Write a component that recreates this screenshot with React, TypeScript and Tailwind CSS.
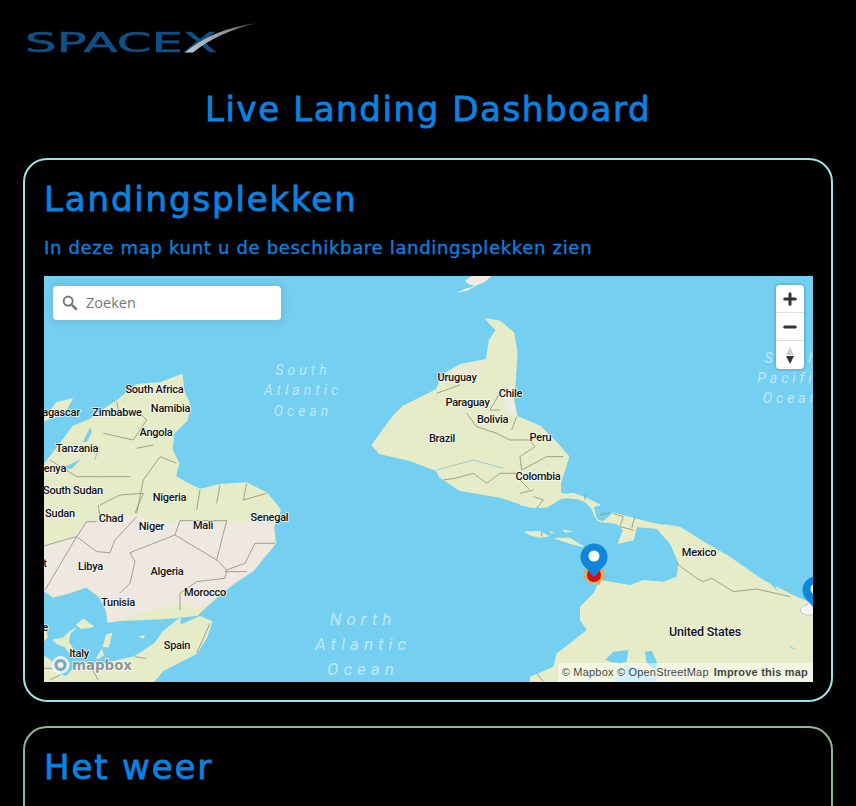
import { Plus, Minus } from 'lucide-react';

const labels: Array<[string, number, number, number?]> = [
  ['South Africa', 154.5, 393],
  ['agascar', 61, 416],
  ['Zimbabwe', 117, 416],
  ['Namibia', 170.5, 412],
  ['Angola', 156, 436],
  ['Tanzania', 77, 452],
  ['enya', 55, 472],
  ['South Sudan', 73, 494],
  ['Nigeria', 169.5, 501],
  ['Sudan', 60, 517],
  ['Chad', 111, 522],
  ['Niger', 151.5, 530],
  ['Mali', 203, 529],
  ['Senegal', 269.5, 521],
  ['Libya', 90.5, 570],
  ['Algeria', 167, 575],
  ['Morocco', 205, 596],
  ['Tunisia', 118, 606],
  ['Spain', 177, 649],
  ['Italy', 79, 657],
  ['t', 45, 567],
  ['e', 45, 631],
  ['Uruguay', 457, 381],
  ['Chile', 510.5, 397],
  ['Paraguay', 467.5, 406],
  ['Bolivia', 492.5, 423],
  ['Peru', 540.5, 441],
  ['Brazil', 442, 442],
  ['Colombia', 538, 480],
  ['Mexico', 699, 556],
  ['United States', 705, 636, 12.5],
];

const oceans: Array<[string, number, number, number]> = [
  ['South', 303, 375, 14],
  ['Atlantic', 303, 395, 14],
  ['Ocean', 303, 416, 14],
  ['North', 363, 625, 17],
  ['Atlantic', 363, 650, 17],
  ['Ocean', 363, 675, 17],
  ['South', 792, 363, 14],
  ['Pacific', 792, 383, 14],
  ['Ocean', 792, 403, 14],
];

const LAND = '#e5ecc7';
const WATER = '#75cff0';
const BORDER = '#8b8f7c';

function Logo() {
  return (
    <svg viewBox="0 0 260 60" className="block h-[60px] w-[260px] blur-[0.5px]">
      <defs>
        <linearGradient id="swoosh" x1="0" x2="1">
          <stop offset="0" stopColor="#c4c8cc" />
          <stop offset="0.6" stopColor="#8f9296" />
          <stop offset="1" stopColor="#222" />
        </linearGradient>
      </defs>
      <text
        x="25"
        y="52"
        textLength="192"
        lengthAdjust="spacingAndGlyphs"
        fontFamily="'DejaVu Sans', sans-serif"
        fontSize="26"
        fill="#0f5088"
        stroke="#0f5088"
        strokeWidth="0.5"
      >
        SPACEX
      </text>
      <path d="M185 52.5C202 38 226 27 257 23C231 29 208 40 193 52.5Z" fill="url(#swoosh)" />
    </svg>
  );
}

function WorldMap() {
  return (
    <svg viewBox="44 276 769 406" className="block h-[406px] w-[769px] bg-[#75cff0]">
      {/* top sliver */}
      <g transform="translate(430 270) scale(0.3333)">
        <path d="M105 32L125 18H185L165 35L135 48L115 42Z" fill="#f1ebe3" />
        <path d="M78 68L110 55L140 48L110 62Z" fill="#f4f6ea" />
      </g>

      {/* africa / spain */}
      <g transform="translate(20 370) scale(0.3333)">
        <g fill={LAND} stroke={LAND} strokeWidth="6" strokeLinejoin="round">
          <path d="M72 150L110 100L155 88L130 130Z" />
          <path d="M72 285L100 250L130 210L160 170L210 150L250 120L290 95L320 70L350 45L420 40L485 15L490 60L510 110L500 150L460 190L455 240L475 280L465 320L500 340L540 360L600 345L680 340L740 370L780 420L760 470L765 520L700 600L640 640L590 680L530 735L430 745L300 750L265 755L260 720L240 680L200 650L140 670L100 680L72 660Z" />
        </g>
        <path
          d="M72 530L150 505L200 455L340 435L450 462L480 450L620 452L760 458L765 520L700 600L640 640L590 680L540 715L480 700L400 720L300 750L265 755L260 720L240 680L200 650L140 670L100 680L72 660Z"
          fill="#eee8e1"
        />
        <g fill="none" stroke={BORDER} strokeWidth="2.4">
          <path d="M72 528L150 505L170 500L230 545L270 548L285 510L350 440M330 548L345 575L330 640L300 670M330 548L465 495L590 570L620 600L615 625L530 635L480 670V720M465 495L480 452H620L590 570M620 600L675 580L705 520H765M170 500L75 660M615 605H680" />
          <path d="M230 455L200 455L170 500M240 405L300 375L370 370L345 430M235 405L240 445M350 430L370 330L420 260L470 280M540 360L530 420M600 345L590 400M680 340L670 390L740 370M90 270L170 320L230 320L330 320M250 190L340 210L380 150L360 130M350 235L400 225M290 95L300 140" />
        </g>
        <path d="M190 215L210 175L215 185L200 215Z M115 300L180 270L155 295Z M225 265L238 230L225 270Z" fill={WATER} stroke="#8cc0c8" strokeWidth="1.5" />
      </g>

      {/* mediterranean + europe */}
      <g transform="translate(40 600) scale(0.3333)">
        <g fill={LAND} stroke={LAND} strokeWidth="4" strokeLinejoin="round">
          <path d="M12 75L22 110L12 122Z" />
          <path d="M110 75L130 58L160 80L125 85Z" />
          <path d="M40 120L70 115L85 100L105 85L90 100L85 125L100 150L115 170L95 165L75 140L50 130Z" />
          <path d="M190 140L200 105L215 100L205 140Z" />
          <path d="M170 175L185 150L190 165L175 175Z" />
          <path d="M300 110L312 108L310 114Z" />
          <path d="M12 170L30 180L40 205L60 225L80 230L115 190L145 195L200 190L285 170L345 130L370 95L420 55V100L400 140L365 190L340 210L325 245H12Z" />
        </g>
        <path d="M285 170L340 180M12 205L40 205M30 240L60 225M150 195L175 240" fill="none" stroke={BORDER} strokeWidth="2.4" />
      </g>
      <g transform="translate(20 370) scale(0.3333)">
        <path d="M400 840L430 790L540 740L575 755L560 800L530 850L430 900L400 935H340L365 885Z" fill={LAND} stroke={LAND} strokeWidth="5" strokeLinejoin="round" />
        <path d="M530 850L570 760" fill="none" stroke={BORDER} strokeWidth="2.4" />
      </g>

      {/* south america */}
      <g transform="translate(360 310) scale(0.3333)">
        <path
          d="M380 28L420 35L460 70L470 130L465 200L460 270L470 320L540 350L590 400L625 440L600 520L600 550L650 565L610 560L560 590L510 590L420 560L300 540L240 500L230 480L150 450L60 430L38 405L100 320L130 290L230 240L250 195L300 165L380 150L390 90L410 60Z"
          fill={LAND}
          stroke={LAND}
          strokeWidth="6"
          strokeLinejoin="round"
        />
        <path d="M300 165L375 150L370 200L300 225L250 215L250 195Z" fill="#e9e8d0" />
        <path d="M425 240L462 230L460 275L470 320L440 305Z" fill="#eeebe4" />
        <g fill="none" stroke={BORDER} strokeWidth="2.4">
          <path d="M230 250L300 225M320 310L350 350L410 370L450 390L510 390L525 410L480 440L485 480L560 440L610 440M470 490L420 490L380 520L340 490L285 505L250 510M470 500L540 570M420 300L390 300L425 240M470 320L455 360" />
          <path d="M230 480L340 450L430 475" stroke="#8fc3c4" />
        </g>
      </g>

      {/* central + north america */}
      <g transform="translate(520 490) scale(0.3333)">
        <g fill={LAND} stroke={LAND} strokeWidth="3" strokeLinejoin="round">
          <path d="M0 0H120L115 15L90 30L60 52L0 45Z" />
          <path d="M122 15L160 10L200 25L240 45L220 50L230 90L250 95L280 68L340 85L400 100L450 110V160L410 115L350 110L340 150L295 160L310 120L290 100L240 95L225 80L215 55L195 35L160 22L130 25Z" />
          <path d="M15 125H60L85 138L60 142L30 135ZM130 120L155 125L135 126ZM105 145H150L190 170L150 160ZM90 125L100 128L92 130Z" />
        </g>
        <path d="M0 10L40 0M50 55L70 30L40 20" fill="none" stroke={BORDER} strokeWidth="2.4" />
        <path d="M195 15V30M240 75L270 68M280 70L310 80L300 110L340 120M345 80L335 115M65 125V140" fill="none" stroke={BORDER} strokeWidth="2.4" />
      </g>
      <g transform="translate(530 520) scale(0.3333)">
        <path
          d="M400 12L450 20L530 70L600 110L700 180L800 230L860 255V490H0V470L70 440L80 400L120 370L170 330L150 300L150 260L190 220L210 180L300 195L340 180L400 185L440 170L445 130L420 70Z"
          fill={LAND}
        />
        <path d="M610 95L660 120L710 155L745 215L700 170L650 130Z" fill={WATER} />
        <path d="M440 130L500 175L520 185L545 175L610 215L680 207L780 230" fill="none" stroke={BORDER} strokeWidth="2.4" />
        <path d="M225 420L250 395L295 390L290 425L270 430L240 425ZM345 395L365 392L382 430L375 450L350 430ZM775 375L800 390L785 385Z" fill={WATER} />
        <path d="M250 485L290 435L340 450L385 470L380 490Z" fill="#a9def0" />
        <path d="M20 460L40 485" fill="none" stroke={BORDER} strokeWidth="2.4" />
      </g>

      {/* ocean names */}
      {oceans.map(([name, x, y, size], i) => (
        <text
          key={i}
          x={x}
          y={y}
          textAnchor="middle"
          fontFamily="Roboto, sans-serif"
          fontStyle="italic"
          fontSize={size}
          letterSpacing={size === 14 ? 4 : 5}
          fill="#ffffff"
          fillOpacity="0.55"
        >
          {name}
        </text>
      ))}

      {/* place names */}
      {labels.map(([name, x, y, size]) => (
        <text
          key={name}
          x={x}
          y={y}
          textAnchor="middle"
          fontFamily="Roboto, sans-serif"
          fontWeight="500"
          fontSize={size ?? 11}
          letterSpacing="-0.25"
          fill="#111111"
          stroke="#ffffff"
          strokeOpacity="0.75"
          strokeWidth="1.6"
          paintOrder="stroke"
        >
          {name}
        </text>
      ))}

      {/* sun marker + pin */}
      <path
        d="M594 565L596 568L600 566L600 570L605 570L602 574L606 578L601 579L600 585L594 582L589 585L588 579L582 578L586 574L583 570L588 570L588 566L592 568Z"
        fill="#f0a53c"
      />
      <circle cx="594" cy="575" r="7" fill="#d40d0d" />
      <path d="M594 577L584 566A13.5 13.5 0 1 1 604 566Z" fill="#0f86da" />
      <circle cx="594" cy="556" r="5.5" fill="#ffffff" />

      {/* second marker, cut by the map edge */}
      <path d="M801 613C799 607 804 605 807 605C809 599 818 599 820 605V615H806Z" fill="#f6f6f6" stroke="#bdbdbd" strokeWidth="0.8" />
      <path d="M816 610L806 599A13.5 13.5 0 1 1 826 599Z" fill="#0f86da" />
      <circle cx="816" cy="589" r="5.5" fill="#ffffff" />

      {/* mapbox wordmark */}
      <circle cx="60.5" cy="665" r="7.5" fill="#7f8a8f" fillOpacity="0.6" stroke="#ffffff" strokeOpacity="0.8" strokeWidth="3" />
      <circle cx="60.5" cy="665" r="3" fill="#ffffff" fillOpacity="0.85" />
      <text
        x="72"
        y="670"
        textLength="60"
        lengthAdjust="spacingAndGlyphs"
        fontFamily="'DejaVu Sans', sans-serif"
        fontWeight="700"
        fontSize="14.5"
        fill="#7c8489"
        fillOpacity="0.85"
        stroke="#ffffff"
        strokeOpacity="0.7"
        strokeWidth="2"
        paintOrder="stroke"
      >
        mapbox
      </text>
    </svg>
  );
}

export default function App() {
  return (
    <div className="h-[806px] overflow-hidden bg-black text-[#0c82e0] font-['DejaVu_Sans',sans-serif]">
      <Logo />

      <h1 className="mt-[25px] text-center text-[34px] leading-[48px] tracking-[1.6px] [-webkit-text-stroke:0.8px_#0c82e0]">
        Live Landing Dashboard
      </h1>

      {/* Landingsplekken */}
      <section className="mx-[23px] mt-[25px] rounded-[24px] border-2 border-[#9fe3e8] pt-[17px] pr-[18px] pb-[18px] pl-[19px]">
        <h2 className="text-[34px] leading-[44px] tracking-[1.85px] [-webkit-text-stroke:0.8px_#0c82e0]">
          Landingsplekken
        </h2>
        <p className="mt-[15px] mb-[16px] text-[18px] leading-[24px] tracking-[0.68px] [-webkit-text-stroke:0.3px_#0c82e0]">
          In deze map kunt u de beschikbare landingsplekken zien
        </p>

        <div className="relative overflow-hidden">
          <WorldMap />

          {/* search box */}
          <div className="absolute top-[10px] left-[9px] flex h-[34px] w-[228px] items-center rounded-[4px] bg-white pl-[7px] shadow-[0_0_10px_2px_rgba(0,0,0,0.1)] font-['Open_Sans',sans-serif] text-[14.5px] text-[#777777]">
            <svg viewBox="0 0 18 18" className="h-[20px] w-[20px] fill-[#757575]">
              <path d="M7.4 2.5c-2.7 0-4.9 2.2-4.9 4.9s2.2 4.9 4.9 4.9c1 0 1.8-.2 2.5-.8l3.7 3.7c.2.2.4.3.8.3.7 0 1.1-.4 1.1-1.1 0-.3-.1-.5-.3-.8L11.4 10c.4-.8.8-1.6.8-2.5.1-2.8-2.1-5-4.8-5zm0 1.6c1.8 0 3.2 1.4 3.2 3.2s-1.4 3.2-3.2 3.2-3.3-1.3-3.3-3.1 1.4-3.3 3.3-3.3z" />
            </svg>
            <span className="ml-[6px]">Zoeken</span>
          </div>

          {/* zoom controls */}
          <div className="absolute top-[9px] right-[9px] flex w-[28px] flex-col divide-y divide-[#dddddd] rounded-[4px] bg-white shadow-[0_0_0_2px_rgba(0,0,0,0.1)]">
            <div className="flex h-[28px] items-center justify-center text-[#333333]">
              <Plus size={18} strokeWidth={4} />
            </div>
            <div className="flex h-[28px] items-center justify-center text-[#333333]">
              <Minus size={18} strokeWidth={4} />
            </div>
            <div className="flex h-[28px] flex-col items-center justify-center gap-[1px]">
              <div className="h-0 w-0 border-x-[4px] border-b-[8px] border-x-transparent border-b-[#cccccc]" />
              <div className="h-0 w-0 border-x-[4px] border-t-[8px] border-x-transparent border-t-[#333333]" />
            </div>
          </div>

          {/* attribution */}
          <div className="absolute right-0 bottom-0 flex h-[19px] items-center gap-[5px] bg-white/50 pr-[5px] pl-[4px] font-['Liberation_Sans',sans-serif] text-[11px] tracking-[0.2px] text-black/75">
            <span>© Mapbox © OpenStreetMap</span>
            <span className="font-bold">Improve this map</span>
          </div>
        </div>
      </section>

      {/* Het weer */}
      <section className="mx-[23px] mt-[24px] h-[300px] rounded-[24px] border-2 border-[#8fb98f] px-[19px] pt-[17px]">
        <h2 className="text-[34px] leading-[44px] tracking-[1.85px] [-webkit-text-stroke:0.8px_#0c82e0]">
          Het weer
        </h2>
      </section>
    </div>
  );
}
